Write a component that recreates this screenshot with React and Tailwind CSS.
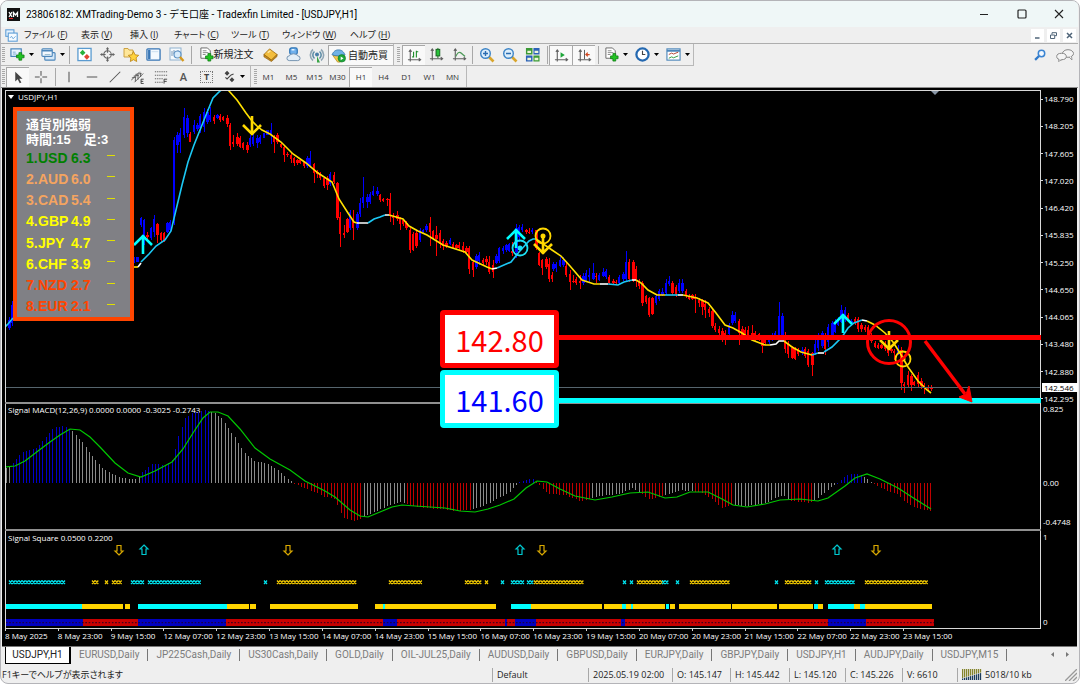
import React from 'react';

const STEP = 3.3125;

// Candles, in thirds of a pixel from the run's origin: colour + body, or colour + high, body, low
const candleRuns = [
  { x: 9, top: 85, bars: 'b695,705,728,735 b647,660,715,722' },
  {
    x: 134,
    top: 85,
    bars: `b517,535 b515,530 b396,400,420,425 b403,405,450,480 r440,450,455,462 b425,428,460,465 b390,402,440,455 r415,418,450,475
      r440,443,465,470 r440,445,468,472 b410,415,440,445 b405,410,435,440 b155,165,415,420 b140,150,180,203 b130,145,170,205 b70,95,150,160
      b90,98,145,155 r140,146,170,172 b105,120,142,148 b115,120,133,138 b88,92,130,145 b70,80,125,140 b72,80,112,118 b65,90,105,112
      r90,97,108,118 b86,90,100,103 r88,92,105,112 r93,97,105,108 r90,100,118,125 r115,120,182,195 r150,172,178,185 r145,155,178,182
      r152,160,185,190 r170,175,190,195 r170,180,195,205 b150,160,180,185 b145,155,178,182 b150,160,175,190 b150,155,170,178`,
  },
  {
    x: 264,
    top: 85,
    bars: `b143,160 b135,150 b115,135,150,178 r150,155,172,203 r145,150,172,178 r172,178,186,190 r180,186,210,230 r200,206,210,216
      r205,210,222,235 r215,220,235,242 r222,226,234,240 r225,226,233,238 r228,230,243,250 b212,218,243,248 b198,220,240,250 r235,238,265,294
      r255,262,267,278 r262,266,280,286 r275,280,303,308 r272,280,300,314 b260,268,298,302 r262,270,290,298 r290,293,398,404 r380,395,447,487
      r420,445,450,458 r400,403,440,445 b375,382,428,434 r375,405,430,465 b382,388,430,434 b340,353,388,395 b275,335,355,370 b328,335,350,368
      b320,328,352,356 b303,318,330,334 b306,318,328,332 r326,330,346,350 r338,342,347,352 r338,341,345,362 r323,343,393,412 r384,395,400,420
      r378,390,402,408 r395,400,418,435 r402,406,418,424 r408,414,430,436 r430,435,494,504 r440,446,494,498 r436,444,482,488 b430,436,466,470
      b432,435,441,444 b416,422,436,440 r397,415,440,483 r434,438,460,465 r423,450,462,512 r436,444,476,490 r462,468,484,496 r468,474,482,488
      b460,464,476,480 r470,476,488,492 r476,480,490,494 r472,480,490,498 r472,482,496,503 r484,490,502,508 r484,490,553,568 r528,532,556,575
      b508,514,545,552 b502,510,528,540 r518,524,534,542 r514,522,532,540 r514,530,560,566 r526,540,562,580 b508,514,534,538 b486,490,528,534
      b484,490,498,506 b476,480,494,500 b474,478,498,502 r472,498,504,512 b418,430,500,520 b420,425,455,470 b417,425,436,442 r432,436,442,446
      r428,440,443,447 b430,434,442,446 r434,436,488,494 r500,505,540,543 r522,526,548,570 r515,522,546,552 r518,536,583,590 r560,570,582,592`,
  },
  {
    x: 553,
    top: 220,
    bars: `b125,132,148,152 b125,132,145,155 b110,120,138,142 b112,120,134,140 r130,138,164,170 r150,162,185,210 r165,182,186,190 r172,176,190,196
      r165,182,190,207 b158,168,190,194 b150,160,182,186 b145,165,170,188 b130,160,176,180 r160,168,172,190 b160,165,180,184 b145,155,168,172
      b148,154,170,176 r165,172,190,196 r178,184,190,194 r180,186,190,196 b165,170,188,192 b155,162,178,184 b93,125,176,182 r118,125,178,186
      r120,125,180,186 r138,146,180,200 r178,184,198,206 r184,190,248,258 r224,228,246,252 r230,234,284,290 r230,234,283,286 b224,228,248,254
      b208,214,238,242 b205,216,224,228 b178,188,220,226 b167,182,192,198 r182,188,220,226 r194,200,222,230 b178,190,212,218 b178,188,212,218
      r206,214,226,234 r222,228,236,240 r222,226,236,240 r222,230,238,280 r234,240,250,262 r236,242,262,285 r240,252,270,295 r262,266,278,292
      r268,272,318,324 r308,318,330,336 r318,328,340,346 r325,332,352,365 r330,340,350,375 b308,314,342,348 b273,285,308,314 b276,285,302,308
      r298,302,340,375 r318,326,345,352 r322,330,350,360 r318,330,345,350`,
  },
  {
    x: 752,
    top: 270,
    bars: `r165,190,205,210 r182,188,205,212 r188,192,208,214 r200,206,228,250 r198,204,220,226 b194,200,215,222 b190,198,208,212 b182,188,195,200
      b97,138,195,200 b128,138,195,200 r185,195,238,250 r212,220,252,265 r228,235,264,268 r232,238,266,270 r234,238,252,258 b230,240,246,254
      r232,238,258,264 r238,244,284,292 r246,250,284,318 b208,222,250,255 b188,205,235,242 b182,190,228,234 r190,200,238,255 b162,170,215,230
      b152,160,200,206 b148,160,186,190 b142,148,164,168 b105,120,155,160 b110,120,150,156 r128,134,152,156 b148,152,158,162 r142,148,160,166
      r140,146,176,185 r158,164,178,186 r164,170,180,186 r164,172,198,204 r190,196,212,218 r212,218,230,235 r220,226,234,238 r222,226,234,238
      r212,218,236,242 r228,234,248,258 r234,238,244,250 r238,242,248,270 b226,234,248,256 r232,240,340,360 r336,342,348,368 r302,316,344,350
      r312,318,346,362 r332,336,344,348 r306,316,342,350 r324,332,348,356 r338,346,354,372 r344,350,358,362 r346,350,358,364`,
  },
];

const candles = candleRuns.flatMap(({ x, top, bars }) =>
  bars.trim().split(/\s+/).map((bar, i) => {
    const n = bar.slice(1).split(',').map(Number);
    const [hi, a, b, lo] = n.length === 2 ? [n[0], n[0], n[1], n[1]] : n;
    return {
      up: bar[0] === 'b',
      x: x + i * STEP,
      hi: top + hi / 3,
      a: top + a / 3,
      b: top + b / 3,
      lo: top + lo / 3,
    };
  })
);

const CYAN = '#1cc8f4';
const YELLOW = '#ffe000';

const average = [
  [CYAN, '5,327 8,324 13,318'],
  [YELLOW, '133,267 138,267'],
  ['#fff', '138,267 141,263'],
  [CYAN, '141,262 149,254 156,246 165,240 171,231 176,210 182,185 188,162 194,145 200,130 206,115 213,98 220,91 223,89'],
  [YELLOW, '227,89 229,91 237,100 246,113 252,121 257,126 262,130 270,134 281,142 293,154 306,163 318,173 332,182 339,199 348,213 354,222 357,223'],
  ['#fff', '357,223 368,223'],
  [CYAN, '368,223 374,219 380,217 385,215'],
  ['#fff', '385,215 389,215'],
  [YELLOW, '389,215 403,219 409,226 418,231 427,235 443,245 465,252 472,260 487,267 492,269'],
  ['#fff', '492,269 497,268'],
  [CYAN, '497,268 511,262 519,252 529,241 533,239 536,239'],
  [YELLOW, '536,239 552,250 561,256 570,266 582,280 594,284 600,284'],
  ['#fff', '600,284 608,284'],
  [CYAN, '608,284 618,285 624,282 632,280'],
  ['#fff', '632,280 636,280'],
  [YELLOW, '636,280 641,283 648,290 657,295 665,295'],
  [CYAN, '665,295 678,295'],
  ['#fff', '678,295 683,295'],
  [YELLOW, '683,295 697,298 708,303 716,313 725,325 733,328 742,333 752,340 765,345 770,345'],
  ['#fff', '770,345 776,344 779,341 784,341'],
  [YELLOW, '784,341 792,347 801,352 812,355'],
  [CYAN, '812,355 818,353'],
  ['#fff', '818,353 824,353'],
  [CYAN, '824,352 832,347 842,337 848,328 854,323 862,320'],
  ['#fff', '862,320 867,321'],
  [YELLOW, '867,321 875,325 885,333 893,342 900,353 908,367 918,381 927,390 931,393'],
];

const macdShape = [
  [5, 469], [12, 464], [22, 452], [37, 448], [45, 438], [53, 428], [62, 426], [70, 429], [82, 442], [92, 456], [102, 468],
  [112, 474], [122, 478], [135, 479], [142, 472], [152, 464], [165, 465], [172, 460], [178, 437], [185, 418], [192, 413],
  [205, 410], [215, 413], [222, 419], [235, 438], [245, 454], [255, 461], [268, 464], [280, 472], [290, 481], [295, 483],
  [303, 488], [315, 492], [325, 497], [335, 499], [342, 517], [352, 521], [360, 519], [372, 513], [385, 507], [400, 502],
  [412, 506], [425, 508], [440, 509], [455, 511], [470, 510], [485, 505], [500, 497], [508, 493], [518, 483], [525, 480],
  [531, 478], [537, 483], [548, 494], [565, 495], [580, 501], [590, 499], [600, 496], [620, 494], [633, 488], [640, 493],
  [650, 500], [660, 497], [672, 493], [680, 490], [690, 491], [700, 492], [712, 499], [722, 508], [732, 505], [745, 506],
  [765, 503], [775, 498], [783, 495], [790, 501], [810, 503], [820, 496], [830, 488], [838, 483], [845, 476], [852, 473],
  [860, 475], [868, 479], [872, 483], [885, 490], [898, 494], [905, 502], [915, 508], [932, 511],
];

// each entry: bars left of this x get the colour
const macdColors = [
  [10, '#8a8a8a'], [69, '#0000c8'], [139, '#8a8a8a'], [211, '#0000c8'], [293, '#8a8a8a'], [361, '#c00000'], [405, '#8a8a8a'],
  [470, '#c00000'], [518, '#8a8a8a'], [536, '#0000c8'], [592, '#c00000'], [640, '#8a8a8a'], [664, '#c00000'], [694, '#8a8a8a'],
  [733, '#c00000'], [790, '#8a8a8a'], [814, '#c00000'], [837, '#8a8a8a'], [863, '#0000c8'], [871, '#8a8a8a'], [940, '#c00000'],
];

const macdSignal =
  '5,467 15,466 25,461 38,451 50,442 60,435 70,429 80,430 90,437 100,447 115,463 128,473 141,477 155,471 172,462 183,449 193,433 203,418 210,412 218,412 228,416 240,429 255,448 270,459 290,470 305,481 325,491 335,497 350,510 360,516 368,517 380,512 392,507 402,505 415,506 430,507 445,508 460,511 475,512 488,509 500,505 514,499 526,488 537,481 547,482 560,489 575,496 595,500 612,497 630,493 648,492 665,498 677,497 690,492 708,492 722,499 733,505 747,507 765,504 780,500 800,499 818,501 828,498 845,486 855,478 867,474 880,479 898,488 915,499 931,509';

const macdY = (x) => {
  const i = macdShape.findIndex(([px]) => px >= x);
  if (i <= 0) return macdShape[0][1];
  const [x0, y0] = macdShape[i - 1];
  const [x1, y1] = macdShape[i];
  return y0 + ((y1 - y0) * (x - x0)) / (x1 - x0);
};

const macdBars = Array.from({ length: 280 }, (_, i) => {
  const x = 6 + i * STEP;
  return { x, y: macdY(x), color: macdColors.find(([end]) => x < end)[1] };
});

const crossRuns = [
  ['c', 9, 66], ['y', 92, 99], ['y', 105, 109], ['y', 112, 122], ['c', 131, 145], ['c', 148, 201], ['c', 264, 267], ['y', 277, 357],
  ['y', 389, 423], ['y', 465, 482], ['y', 485, 489], ['c', 501, 505], ['c', 511, 525], ['c', 527, 532], ['y', 534, 585],
  ['c', 623, 627], ['c', 630, 634], ['y', 637, 662], ['c', 662, 670], ['c', 676, 680], ['y', 690, 730], ['c', 775, 779],
  ['y', 785, 812], ['c', 815, 819], ['c', 825, 855], ['y', 865, 928],
];

const crossPath = (a, b) =>
  Array.from({ length: Math.round((b - a) / STEP) }, (_, k) => {
    const x = a + k * STEP;
    return `M${x} 580.5l3 3.500M${x + 3} 580.5l-3 3.500`;
  }).join('');

const squareRuns = [
  ['c', 5, 82], ['y', 82, 123], ['y', 125, 130], ['c', 138, 227], ['y', 227, 249], ['y', 250, 256], ['y', 270, 358], ['y', 375, 496],
  ['c', 383, 385], ['c', 511, 531], ['y', 531, 602], ['y', 604, 665], ['c', 622, 626], ['c', 631, 633], ['c', 666, 669],
  ['y', 670, 675], ['y', 679, 731], ['y', 732, 777], ['y', 779, 813], ['c', 814, 818], ['y', 818, 823], ['c', 828, 854],
  ['y', 854, 860], ['c', 860, 865], ['y', 865, 932],
];

const trendRuns = [
  ['b', 5, 83], ['r', 83, 138], ['b', 138, 226], ['r', 226, 383], ['b', 383, 397], ['r', 397, 505], ['b', 505, 507], ['r', 507, 515],
  ['b', 515, 536], ['r', 536, 621], ['b', 621, 625], ['r', 625, 828], ['b', 828, 866], ['r', 866, 934],
];

const prices = [
  '148.790', '148.205', '147.605', '147.020', '146.420', '145.835', '145.250', '144.650', '144.065', '143.480', '142.880', '142.295',
];

const times = [
  '8 May 2025', '8 May 23:00', '9 May 15:00', '12 May 07:00', '12 May 23:00', '13 May 15:00', '14 May 07:00', '14 May 23:00',
  '15 May 15:00', '16 May 07:00', '16 May 23:00', '19 May 15:00', '20 May 07:00', '20 May 23:00', '21 May 15:00', '22 May 07:00',
  '22 May 23:00', '23 May 15:00',
];

const strengths = [
  ['USD', '6.3', 'text-[#008000]'],
  ['AUD', '6.0', 'text-[#f4a460]'],
  ['CAD', '5.4', 'text-[#f4a460]'],
  ['GBP', '4.9', 'text-[#ffff00]'],
  ['JPY', '4.7', 'text-[#ffff00]'],
  ['CHF', '3.9', 'text-[#ffff00]'],
  ['NZD', '2.7', 'text-[#ff4500]'],
  ['EUR', '2.1', 'text-[#ff4500]'],
];

const menus = [
  ['ファイル', 'F', 'w-[57px]'],
  ['表示', 'V', 'w-[49px]'],
  ['挿入', 'I', 'w-[44px]'],
  ['チャート', 'C', 'w-[57px]'],
  ['ツール', 'T', 'w-[51px]'],
  ['ウィンドウ', 'W', 'w-[68px]'],
  ['ヘルプ', 'H', 'w-[50px]'],
];

const tabs = [
  'EURUSD,Daily', 'JP225Cash,Daily', 'US30Cash,Daily', 'GOLD,Daily', 'OIL-JUL25,Daily', 'AUDUSD,Daily', 'GBPUSD,Daily',
  'EURJPY,Daily', 'GBPJPY,Daily', 'USDJPY,H1', 'AUDJPY,Daily', 'USDJPY,M15',
];

const Icon = ({ children, size = 15 }) => (
  <svg width={size} height={size} viewBox="0 0 16 16" fill="none" className="shrink-0" aria-hidden="true">
    {children}
  </svg>
);

const Plus = ({ x = 8, y = 8 }) => (
  <path
    d={`M${x + 2.5} ${y}h3v2.5h2.5v3h-2.5v2.5h-3v-2.5h-2.5v-3h2.5z`}
    fill="#22c322"
    stroke="#0b7a12"
    strokeWidth="0.8"
  />
);

const Caret = () => (
  <svg width="5" height="3" viewBox="0 0 5 3" aria-hidden="true">
    <path d="M0 0h5L2.5 3z" fill="#000" />
  </svg>
);

const Axes = ({ children }) => (
  <Icon>
    <path d="M3.500 2.500v12M1 12.500h13M2 4l1.500-2L5 4M12.500 11l2 1.500-2 1.500" stroke="#606060" strokeWidth="1.200" />
    {children}
  </Icon>
);

const NewChartIcon = () => (
  <Icon>
    <rect x="1" y="2" width="11" height="8" fill="#eaf4ff" stroke="#3f7fb8" strokeWidth="1.2" />
    <path d="M3 5.500h3M3 7.500h4" stroke="#7aa9d0" />
    <Plus x={7} y={6} />
  </Icon>
);

const ProfilesIcon = () => (
  <Icon>
    <rect x="4" y="6" width="11" height="8" rx="1" fill="#d6e8f8" stroke="#4c86ba" strokeWidth="1.2" />
    <rect x="1" y="2" width="11" height="8" rx="1" fill="#f2f8fe" stroke="#4c86ba" strokeWidth="1.2" />
    <path d="M1 4h11" stroke="#4c86ba" strokeWidth="1.4" />
    <path d="M4 8h6" stroke="#9bc" />
  </Icon>
);

const MarketIcon = () => (
  <Icon>
    <rect x="1" y="1.500" width="14" height="13" fill="#fff" stroke="#5b9bd0" strokeWidth="1.4" />
    <path d="M6 3l3 3-3 3-3-3z" fill="#27b13c" />
    <path d="M10.500 7.500l3 3-3 3-3-3z" fill="#e04632" />
  </Icon>
);

const DataWindowIcon = () => (
  <Icon>
    <circle cx="8" cy="8" r="4" stroke="#666" strokeWidth="1.200" />
    <path d="M8 1v5M8 10v5M1 8h5M10 8h5" stroke="#666" strokeWidth="1.200" />
    <path d="M8 0l1.800 2.500H6.200zM8 16l1.800-2.500H6.200zM0 8l2.500-1.800v3.600zM16 8l-2.500-1.800v3.600z" fill="#666" />
  </Icon>
);

const Star = () => (
  <path d="M10.500 4.500l1.600 3.300 3.600.5-2.600 2.500.6 3.700-3.200-1.800-3.200 1.800.6-3.700-2.600-2.500 3.600-.5z" fill="#ffd23c" stroke="#b98210" strokeWidth="0.8" />
);

const NavigatorIcon = () => (
  <Icon size={16}>
    <path d="M1 1.500h4l1 1.500h4v7H1z" fill="#ffe79a" stroke="#c79a35" strokeWidth="0.900" />
    <Star />
  </Icon>
);

const TerminalIcon = () => (
  <Icon>
    <rect x="1" y="2" width="14" height="12" rx="1" fill="#f4f9ff" stroke="#3775b5" strokeWidth="1.400" />
    <path d="M3.500 3v10" stroke="#3775b5" strokeWidth="2.600" />
    <path d="M6 5h7" stroke="#c7dcef" />
  </Icon>
);

const TesterIcon = () => (
  <Icon size={16}>
    <rect x="1" y="1" width="11" height="12" fill="#f6fafd" stroke="#8fb2d0" />
    <path d="M3 4v5M5 3v4M9 3v3" stroke="#7898b8" />
    <circle cx="8.500" cy="7.500" r="3.500" fill="#d7ebfb" stroke="#5f93c4" strokeWidth="1.200" />
    <path d="M11 10l3.500 4" stroke="#d79a1e" strokeWidth="2.400" />
  </Icon>
);

const OrderIcon = () => (
  <Icon>
    <path d="M2 1h7l3 3v8H2z" fill="#fff" stroke="#666" />
    <path d="M4 4h4M4 6h6M4 8h3" stroke="#888" />
    <Plus x={7} y={7} />
  </Icon>
);

const BookIcon = () => (
  <Icon>
    <path d="M1 8l6-6 8 6-6 6z" fill="#f3bd3d" stroke="#a26e10" strokeWidth="0.900" />
    <path d="M1 8v2.500l8 5 6-5.500V8l-6 6z" fill="#c98b1a" stroke="#8d5f0d" strokeWidth="0.700" />
    <path d="M5 6l3-2" stroke="#ffe9a5" strokeWidth="1.500" />
  </Icon>
);

const CommunityIcon = () => (
  <Icon>
    <rect x="4" y="1" width="8" height="7" rx="2" fill="#6fb0ec" stroke="#2d74b5" strokeWidth="1.300" />
    <path d="M3.500 14.500a2.500 2.500 0 010-5 4.800 3.500 0 019 0 2.500 2.500 0 010 5z" fill="#e3eef7" stroke="#6f8fae" />
    <path d="M6 3h3" stroke="#e8f4ff" strokeWidth="1.500" />
  </Icon>
);

const SignalIcon = () => (
  <Icon size={16}>
    <path d="M4 13.500a7 7 0 010-11M12 2.500a7 7 0 010 11" stroke="#90a6b5" strokeWidth="1.600" />
    <path d="M5.500 11.500a4.500 4.500 0 010-7M10.500 4.500a4.500 4.500 0 010 7" stroke="#5f8ea8" strokeWidth="1.600" />
    <circle cx="8" cy="7.500" r="2" fill="#4c7fa8" />
    <path d="M8 9l3 6.500H8z" fill="#3aa546" />
  </Icon>
);

const AutoIcon = () => (
  <Icon>
    <path d="M2 8h12l-4 7H7z" fill="#f3c94a" stroke="#b48922" strokeWidth="0.800" />
    <path d="M1 7c1-1 2-5 7-5s6 4 7 5c-3 2-11 2-14 0z" fill="#6fb2e6" stroke="#2f75ad" strokeWidth="0.900" />
    <circle cx="11.500" cy="11" r="4" fill="#1ea63a" stroke="#0f7422" strokeWidth="0.600" />
    <path d="M10.300 9v4l3-2z" fill="#fff" />
  </Icon>
);

const ZoomIcon = ({ plus }) => (
  <Icon size={16}>
    <path d="M9.500 9.500l5 5" stroke="#d9a52b" strokeWidth="2.600" />
    <circle cx="6.500" cy="6.500" r="4.800" fill="#dceefb" stroke="#3d84c6" strokeWidth="1.400" />
    <path d={plus ? 'M4 6.500h5M6.500 4v5' : 'M4 6.500h5'} stroke="#2b6cb0" strokeWidth="1.400" />
  </Icon>
);

const TileIcon = () => (
  <Icon>
    <path d="M1 1h7v7H1z" fill="#3b9a36" />
    <path d="M9 1h6.500v7H9z" fill="#2b62b8" />
    <path d="M1 9h7v6.500H1z" fill="#2b62b8" />
    <path d="M9 9h6.500v6.500H9z" fill="#3b9a36" />
    <path d="M2.500 4h4v2.500h-4zM10.200 4h4v2.500h-4zM2.500 11.500h4V14h-4zM10.200 11.500h4V14h-4z" fill="#eef6d9" />
  </Icon>
);

const ClockIcon = () => (
  <Icon>
    <circle cx="8" cy="8" r="6.500" fill="#fff" stroke="#2468b0" strokeWidth="2.400" />
    <path d="M8 4v4h3" stroke="#444" strokeWidth="1.200" />
  </Icon>
);

const TemplateIcon = () => (
  <Icon>
    <rect x="1" y="2" width="14" height="12" fill="#fff" stroke="#4c86ba" strokeWidth="1.200" />
    <path d="M1 4h14" stroke="#4c86ba" strokeWidth="2" />
    <path d="M3 8l3-1.500 2 1 5-2" stroke="#b3402f" />
    <path d="M3 12l3-1.500 2 1 5-2" stroke="#2f9a3c" />
  </Icon>
);

const ToolButton = ({ label, on, wide, caret, children }) => (
  <button
    type="button"
    aria-label={label}
    className={`flex h-5 shrink-0 items-center justify-center gap-1 ${wide ? 'w-[31px]' : 'w-[23px]'} ${
      on ? 'border-t border-l border-[#a8a8a8] bg-[#f9f9f9]' : ''
    }`}
  >
    {children}
    {caret && <Caret />}
  </button>
);

const Divider = () => <span className="mx-px h-[18px] w-px shrink-0 bg-[#a8a8a8]" />;

const Grip = () => <span className="h-4 w-[3px] shrink-0 bg-[repeating-linear-gradient(#a8a8a8_0_1px,#efefef_1px_2px)]" />;

function TitleBar() {
  return (
    <header className="flex h-[26px] items-center bg-[#eff7f7] pl-[6px] text-black">
      <svg width="13" height="13" viewBox="0 0 13 13" aria-hidden="true">
        <rect width="13" height="13" fill="#111" />
        <path d="M2 4l3 5M5 4L2 9" stroke="#fff" strokeWidth="1.300" />
        <path d="M6.500 9V4.500l2 2.500 2-2.500V9" stroke="#fff" strokeWidth="1.300" fill="none" />
        <path d="M2 10.500h4" stroke="#e02020" />
      </svg>
      <h1 className="ml-[6px] flex-1 font-['Roboto','Noto_Sans_CJK_JP',sans-serif] text-[10px] whitespace-nowrap">
        23806182: XMTrading-Demo 3 - デモ口座 - Tradexfin Limited - [USDJPY,H1]
      </h1>
      <div className="flex">
        <button type="button" aria-label="Minimize" className="flex w-[38px] justify-center">
          <svg width="10" height="10" viewBox="0 0 10 10"><path d="M1 5.500h8" stroke="#222" /></svg>
        </button>
        <button type="button" aria-label="Maximize" className="flex w-[37px] justify-center">
          <svg width="10" height="10" viewBox="0 0 10 10"><rect x="1" y="1" width="8" height="8" rx="1" fill="none" stroke="#222" strokeWidth="1.200" /></svg>
        </button>
        <button type="button" aria-label="Close" className="flex w-[38px] justify-center">
          <svg width="10" height="10" viewBox="0 0 10 10"><path d="M1 1l8 8M9 1L1 9" stroke="#222" strokeWidth="1.100" /></svg>
        </button>
      </div>
    </header>
  );
}

function MenuBar() {
  return (
    <nav className="flex h-[17px] items-center border-b border-[#adadad] pl-1">
      <Icon size={13}>
        <rect x="1" y="1" width="10" height="8" fill="#e6f2fd" stroke="#5a9bd5" strokeWidth="1.300" />
        <rect x="4" y="5" width="11" height="10" fill="#f6fbff" stroke="#5a9bd5" strokeWidth="1.300" />
        <path d="M6 11l2-2 2 3 3-3" stroke="#5a9bd5" />
      </Icon>
      <div className="ml-[6px] flex flex-1">
        {menus.map(([name, key, width]) => (
          <button
            key={name}
            type="button"
            className={`text-left text-[9px] leading-4 whitespace-nowrap [font-feature-settings:'palt'] ${width}`}
          >
            {name} (<u>{key}</u>)
          </button>
        ))}
      </div>
      <div className="flex gap-[3px] pr-[2px]">
        <button type="button" aria-label="Minimize chart" className="flex h-[13px] w-[13px] items-center justify-center bg-white">
          <svg width="7" height="7" viewBox="0 0 7 7"><path d="M1 6h4.500" stroke="#4f6478" strokeWidth="1.400" /></svg>
        </button>
        <button type="button" aria-label="Restore chart" className="flex h-[13px] w-[13px] items-center justify-center bg-white">
          <svg width="7" height="7" viewBox="0 0 7 7"><path d="M2 2.500V.7h4.500v3H5M.5 3h4.200v3.500H.5z" stroke="#4f6478" fill="none" /></svg>
        </button>
        <button type="button" aria-label="Close chart" className="flex h-[13px] w-[13px] items-center justify-center bg-white">
          <svg width="7" height="7" viewBox="0 0 7 7"><path d="M1 1l5 5M6 1L1 6" stroke="#4f6478" strokeWidth="1.500" /></svg>
        </button>
      </div>
    </nav>
  );
}

function MainToolbar() {
  return (
    <div className="flex h-[22px] items-center">
      <div className="flex h-full items-center border-r border-b border-[#b8b8b8] pl-[1px]">
        <Grip />
        <span className="w-[1px]" />
        <ToolButton label="New chart" wide caret><NewChartIcon /></ToolButton>
        <ToolButton label="Profiles" wide caret><ProfilesIcon /></ToolButton>
        <Divider />
        <span className="w-[2px]" />
        <ToolButton label="Market watch"><MarketIcon /></ToolButton>
        <ToolButton label="Data window"><DataWindowIcon /></ToolButton>
        <ToolButton label="Navigator"><NavigatorIcon /></ToolButton>
        <ToolButton label="Terminal"><TerminalIcon /></ToolButton>
        <ToolButton label="Strategy tester"><TesterIcon /></ToolButton>
        <span className="w-[2px]" />
        <Divider />
        <button type="button" className="flex h-5 w-[66px] items-center justify-center text-[10px] whitespace-nowrap">
          <OrderIcon />
          新規注文
        </button>
        <ToolButton label="MetaEditor"><BookIcon /></ToolButton>
        <ToolButton label="Community"><CommunityIcon /></ToolButton>
        <ToolButton label="Signals"><SignalIcon /></ToolButton>
        <button
          type="button"
          className="flex h-5 w-[65px] items-center gap-[2px] border-t border-l border-[#a8a8a8] bg-[#f9f9f9] pl-[2px] text-[10px] whitespace-nowrap"
        >
          <AutoIcon />
          自動売買
        </button>
      </div>
      <div className="flex h-full items-center border-r border-b border-[#b8b8b8] pl-[3px]">
        <Grip />
        <span className="w-[2px]" />
        <ToolButton label="Bar chart" on>
          <Axes><path d="M7 4v6M7 9.500H5.500M10 3v7M10 4h2" stroke="#1f8f2c" strokeWidth="1.200" /></Axes>
        </ToolButton>
        <ToolButton label="Candlesticks">
          <Axes><path d="M9.500 1v11" stroke="#15621d" /><rect x="7.500" y="2.500" width="4" height="7" fill="#28c23a" stroke="#15621d" /></Axes>
        </ToolButton>
        <ToolButton label="Line chart">
          <Axes><path d="M4 10c2-4 3-5 5-4s3 3 5 4" stroke="#4f9a5a" strokeWidth="1.200" /></Axes>
        </ToolButton>
        <Divider />
        <span className="w-[1px]" />
        <ToolButton label="Zoom in"><ZoomIcon plus /></ToolButton>
        <ToolButton label="Zoom out"><ZoomIcon /></ToolButton>
        <ToolButton label="Tile windows"><TileIcon /></ToolButton>
        <span className="w-[2px]" />
        <Divider />
        <ToolButton label="Auto scroll" on>
          <Axes><path d="M7 4.500v6L11.500 7.500z" fill="#1ea63a" /></Axes>
        </ToolButton>
        <ToolButton label="Chart shift" on>
          <Axes><path d="M8 2v10" stroke="#555" /><path d="M13.500 7H10M11.500 5L9.500 7l2 2" stroke="#d2471f" strokeWidth="1.300" /></Axes>
        </ToolButton>
        <span className="w-[2px]" />
        <Divider />
        <ToolButton label="Indicators" wide caret><OrderIcon /></ToolButton>
        <ToolButton label="Periods" wide caret><ClockIcon /></ToolButton>
        <ToolButton label="Templates" wide caret><TemplateIcon /></ToolButton>
      </div>
      <div className="flex flex-1 items-center justify-end gap-[10px] pr-1">
        <button type="button" aria-label="Search">
          <Icon size={12}>
            <path d="M1.500 14.500L7 9" stroke="#2f78c8" strokeWidth="3" />
            <circle cx="10" cy="6" r="4.300" fill="#f2f8ff" stroke="#3a84d2" strokeWidth="2" />
          </Icon>
        </button>
        <button type="button" aria-label="Chat">
          <svg width="18" height="13" viewBox="0 0 18 13" aria-hidden="true">
            <ellipse cx="12" cy="4.500" rx="5.500" ry="3.800" fill="#f4f4f4" stroke="#888" />
            <path d="M13 8l3 3-.5-4" fill="#f4f4f4" stroke="#888" strokeWidth="0.800" />
            <ellipse cx="5.500" cy="7.500" rx="4.800" ry="3.200" fill="#f4f4f4" stroke="#888" />
            <path d="M3 10l-.5 2.500L6 10.600" fill="#f4f4f4" stroke="#888" strokeWidth="0.800" />
          </svg>
        </button>
      </div>
    </div>
  );
}

function DrawToolbar() {
  return (
    <div className="flex h-[22px] items-center border-b border-[#8c8c8c]">
      <div className="flex h-full items-center border-r border-[#b8b8b8] pl-[1px]">
        <Grip />
        <span className="w-[1px]" />
        <ToolButton label="Cursor" on>
          <Icon size={13}><path d="M4 1v12l3-3 2.500 5 2-1L9 9.500h4z" fill="#444" /></Icon>
        </ToolButton>
        <ToolButton label="Crosshair">
          <Icon size={14}><path d="M8 1v5.500M8 9.500V15M1 8h5.500M9.500 8H15" stroke="#555" strokeWidth="1.200" /></Icon>
        </ToolButton>
        <span className="w-[2px]" />
        <Divider />
        <ToolButton label="Vertical line"><Icon size={14}><path d="M8 2v12" stroke="#555" strokeWidth="1.200" /></Icon></ToolButton>
        <ToolButton label="Horizontal line"><Icon size={14}><path d="M2 8h12" stroke="#555" strokeWidth="1.200" /></Icon></ToolButton>
        <ToolButton label="Trend line"><Icon size={14}><path d="M2 14L14 2" stroke="#555" strokeWidth="1.200" /></Icon></ToolButton>
        <ToolButton label="Channel">
          <Icon size={14}>
            <path d="M0 12L10 2M4 14L14 4M1 9l5-1M3 7l6-1M5 5l7-1M5 13V8M8 11V6M11 8V3" stroke="#555" />
            <path d="M14.500 10.500H11.500v5h3M11.500 13h2.500" stroke="#333" />
          </Icon>
        </ToolButton>
        <ToolButton label="Fibonacci">
          <Icon size={14}>
            <path d="M1 2h14M1 6h14M1 10h9M1 14h9" stroke="#555" strokeDasharray="1.5 1" />
            <path d="M11.500 15.500v-5h3.500M11.500 13h3" stroke="#333" />
          </Icon>
        </ToolButton>
        <ToolButton label="Text"><span className="text-[11px] leading-4 font-semibold text-[#555]">A</span></ToolButton>
        <ToolButton label="Label">
          <span className="border border-dotted border-[#777] px-[3px] text-[9px] leading-[10px] font-bold text-[#444]">T</span>
        </ToolButton>
        <ToolButton label="Arrows" wide caret>
          <Icon size={13}>
            <path d="M5 1l3 3-3 3-3-3zM11 9l3 3-3 3-3-3z" fill="#444" />
            <path d="M3 9l2 2 5-5 3-1" stroke="#444" strokeWidth="1.300" />
          </Icon>
        </ToolButton>
        <span className="w-[1px]" />
      </div>
      <div className="flex h-full items-center border-r border-[#b8b8b8] pr-[2px] pl-[3px] text-[8px] text-[#333]">
        <Grip />
        {['M1', 'M5', 'M15', 'M30', 'H1', 'H4', 'D1', 'W1', 'MN'].map((p) => (
          <ToolButton key={p} label={p} on={p === 'H1'}>{p}</ToolButton>
        ))}
      </div>
    </div>
  );
}

// Big entry arrow; (x, y) is its tip
const TradeArrow = ({ x, y, up, color }) => {
  const s = up ? 1 : -1;
  return (
    <path d={`M${x} ${y}v${19 * s}M${x - 9} ${y + 10 * s}L${x} ${y + s}L${x + 9} ${y + 10 * s}`} stroke={color} strokeWidth="2.6" fill="none" />
  );
};

const Ring = ({ x, y, color }) => (
  <g>
    <circle cx={x} cy={y} r="7.500" fill="none" stroke={color} strokeWidth="1.800" />
    <circle cx={x} cy={y} r="2.500" fill={color} />
  </g>
);

function PricePane() {
  return (
    <section className="flex h-[312px]">
      <div className="relative flex-1 overflow-hidden border-t border-l border-[#d8d8d8]">
        <svg className="absolute inset-0 h-full w-full" shapeRendering="crispEdges" aria-hidden="true">
          <g transform="translate(-6 -91)">
            {candles.map((c, i) => (
              <g key={i} fill={c.up ? '#0000ff' : '#ff0000'}>
                <rect x={Math.round(c.x)} y={c.hi} width="1" height={c.lo - c.hi} />
                <rect x={Math.round(c.x) - 1} y={c.a} width={i % 3 ? 2 : 3} height={Math.max(1, c.b - c.a)} />
              </g>
            ))}
            <g shapeRendering="auto">
              {average.map(([color, points]) => (
                <polyline key={points} points={points} fill="none" stroke={color} strokeWidth="1.600" />
              ))}
              <TradeArrow x={143} y={235} up color="#00ffff" />
              <TradeArrow x={252} y={135} color="#ffd800" />
              <TradeArrow x={516} y={229} up color="#00ffff" />
              <Ring x={520} y={248} color="#1ce0f4" />
              <Ring x={543} y={236} color="#ffd800" />
              <TradeArrow x={543} y={254} color="#ffd800" />
              <TradeArrow x={843} y={314} up color="#00ffff" />
              <TradeArrow x={889} y={350} color="#ffd800" />
              <Ring x={903} y={359} color="#ffd800" />
              <path d="M931 91h8l-4 4z" fill="#8895a5" />
            </g>
            <path d="M0 387.500h3000" stroke="#56656e" />
          </g>
        </svg>
        <p className="flex items-center gap-1 pl-[2px] text-[8px] leading-3 text-white">
          <svg width="6" height="4" viewBox="0 0 6 4" aria-hidden="true"><path d="M0 0h6L3 4z" fill="#fff" /></svg>
          USDJPY,H1
        </p>
      </div>
      <div className="relative -mb-[3px] flex w-[37px] flex-col justify-between border-l border-[#d8d8d8] pt-[3px] text-[8px] leading-3 text-white">
        {prices.map((p) => (
          <span key={p} className="flex items-center gap-px">
            <i className="h-px w-[2px] bg-[#d8d8d8]" />
            {p}
          </span>
        ))}
        <span className="absolute bottom-[13px] left-px bg-white pr-1 pl-[2px] leading-[9px] text-black">142.546</span>
      </div>
    </section>
  );
}

function MacdPane() {
  return (
    <section className="flex h-[125px]">
      <div className="relative flex-1 overflow-hidden border-l border-[#d8d8d8]">
        <svg className="absolute inset-0 h-full w-full" aria-hidden="true">
          <g transform="translate(-6 -404)">
            {macdBars.map((b) => (
              <rect
                key={b.x}
                x={Math.round(b.x)}
                y={Math.min(b.y, 483)}
                width="1"
                height={Math.max(1, Math.abs(b.y - 483))}
                fill={b.color}
                shapeRendering="crispEdges"
              />
            ))}
            <polyline points={macdSignal} fill="none" stroke="#00c800" strokeWidth="1.200" />
          </g>
        </svg>
        <p className="pl-[2px] text-[8px] leading-[12px] text-white">Signal MACD(12,26,9) 0.0000 0.0000 -0.3025 -0.2743</p>
      </div>
      <div className="flex w-[37px] flex-col border-l border-[#d8d8d8] pb-[2px] pl-[2px] text-[8px] leading-[10px] text-white">
        <span>0.825</span>
        <span className="mt-[64px]">0.00</span>
        <span className="mt-auto">-0.4748</span>
      </div>
    </section>
  );
}

const fills = { c: '#00ffff', y: '#ffd400', b: '#0000c0', r: '#c80000' };

function SquarePane() {
  const arrow = 'M0 -5L4 -1H2V4.5H-2V-1H-4z';
  return (
    <section className="flex h-[98px]">
      <div className="relative flex-1 overflow-hidden border-b border-l border-[#d8d8d8]">
        <svg className="absolute inset-0 h-full w-full" aria-hidden="true">
          <defs>
            <pattern id="dots" width={STEP} height="7" patternUnits="userSpaceOnUse" patternTransform="translate(5 619)">
              <path d="M1 3h1.300v1.300H1z" fill="#200020" />
            </pattern>
          </defs>
          <g transform="translate(-6 -531)">
            {[[119, 0], [144, 1], [288, 0], [520, 1], [542, 0], [837, 1], [876, 0]].map(([x, up]) => (
              <path
                key={x}
                d={arrow}
                transform={`translate(${x} 550)${up ? '' : ' scale(1 -1)'}`}
                fill="none"
                stroke={up ? '#00c8d0' : '#d8a800'}
                strokeWidth="1.200"
              />
            ))}
            {crossRuns.map(([c, a, b]) => (
              <path key={a} d={crossPath(a, b)} stroke={c === 'c' ? '#00e5f0' : '#f0c800'} strokeWidth="1.200" />
            ))}
            {squareRuns.map(([c, a, b]) => (
              <rect key={`${c}${a}`} x={a} y="604" width={b - a} height="5" fill={fills[c]} />
            ))}
            {trendRuns.map(([c, a, b]) => (
              <rect key={a} x={a} y="619" width={b - a} height="7" fill={fills[c]} />
            ))}
            <rect x="5" y="619" width="929" height="7" fill="url(#dots)" />
          </g>
        </svg>
        <p className="pl-[2px] text-[8px] leading-[13px] text-white">Signal Square 0.0500 0.2200</p>
      </div>
      <div className="flex w-[37px] flex-col justify-between border-l border-[#d8d8d8] pb-[2px] pl-[2px] text-[8px] leading-[11px] text-white">
        <span>1</span>
        <span>0</span>
      </div>
    </section>
  );
}

function StrengthPanel() {
  return (
    <aside className="absolute top-[19px] left-[11px] flex h-[214px] w-[121px] flex-col border-4 border-[#ff4500] bg-[#808085] pt-[6px] pl-[9px] font-['Liberation_Sans','Noto_Sans_CJK_JP',sans-serif] text-[14px] font-bold">
      <h2 className="text-[13px] leading-4 text-white">通貨別強弱</h2>
      <p className="text-[13px] leading-[14px] whitespace-pre text-white">時間:15　足:3</p>
      <ol className="flex flex-1 flex-col">
        {strengths.map(([name, value, color], i) => (
          <li key={name} className={`flex flex-1 items-center leading-4 ${color}`}>
            <span className="w-[12px]">{i + 1}.</span>
            <span className="w-[33px]">{name}</span>
            <span className="w-[36px]">{value}</span>
            <i className="mb-1 h-px w-2 bg-[#e0e000]" />
          </li>
        ))}
      </ol>
    </aside>
  );
}

function Annotations() {
  return (
    <>
      <div className="absolute top-[247px] right-[36px] left-[550px] h-[5px] bg-[#ff0000]" />
      <div className="absolute top-[310px] right-[36px] left-[550px] h-[5px] bg-[#00ffff]" />
      <svg className="absolute top-[220px] left-[851px]" width="140" height="100" viewBox="0 0 140 100" fill="none" stroke="#f00" aria-hidden="true">
        <circle cx="36" cy="34" r="21.500" strokeWidth="3" />
        <path d="M72 33l40 53" strokeWidth="3.500" />
        <path d="M119 94l-13-5 7-3 3-8z" fill="#f00" strokeWidth="1" />
      </svg>
      <div className="absolute top-[222px] left-[438px] flex flex-col gap-[2px] font-['Noto_Sans_CJK_JP',sans-serif] text-[29px] leading-[48px]">
        <span className="flex w-[119px] justify-center rounded-sm border-5 border-[#ff0000] bg-white text-[#ff0000]">142.80</span>
        <span className="flex w-[119px] justify-center rounded-sm border-5 border-[#00ffff] bg-white text-[#0000ff]">141.60</span>
      </div>
    </>
  );
}

function Chart() {
  return (
    <main className="relative bg-black pt-[2px] pl-[3px] font-['Open_Sans',sans-serif]">
      <PricePane />
      <div className="mr-[36px] h-[2px] bg-[#909090]" />
      <MacdPane />
      <div className="mr-[36px] h-[2px] bg-[#909090]" />
      <SquarePane />
      <div className="w-full overflow-hidden">
        <div className="flex w-[951px] pb-1 text-[8px] leading-[13px] text-white">
          {times.map((t) => (
            <span
              key={t}
              className="flex-1 basis-0 whitespace-nowrap bg-[linear-gradient(#d8d8d8,#d8d8d8)] bg-[length:1px_2px] bg-no-repeat"
            >
              {t}
            </span>
          ))}
        </div>
      </div>
      <StrengthPanel />
      <Annotations />
    </main>
  );
}

function ChartTabs() {
  return (
    <nav className="flex h-[20px] items-start border-t border-[#777] bg-[#efefef] pl-[3px] font-['Roboto',sans-serif] text-[10px] leading-4 whitespace-nowrap text-[#7c7c7c]">
      <button type="button" className="h-[17px] w-[66px] border-r-2 border-b border-l border-black bg-white text-[#222]">
        USDJPY,H1
      </button>
      {tabs.map((t) => (
        <button key={t} type="button" className="mt-[2px] h-3 border-r border-[#777] px-2 leading-3">
          {t}
        </button>
      ))}
      <span className="ml-auto flex gap-3 pt-[5px] pr-2">
        <svg width="3" height="5" viewBox="0 0 3 5"><path d="M3 0v5L0 2.500z" fill="#777" /></svg>
        <svg width="3" height="5" viewBox="0 0 3 5"><path d="M0 0v5l3-2.500z" fill="#777" /></svg>
      </span>
    </nav>
  );
}

function StatusBar() {
  const cells = [
    ['Default', 'w-[96px]'],
    ['2025.05.19 02:00', 'w-[84px]'],
    ['O: 145.147', 'w-[58px]'],
    ['H: 145.442', 'w-[59px]'],
    ['L: 145.120', 'w-[56px]'],
    ['C: 145.226', 'w-[57px]'],
    ['V: 6610', 'w-[55px]'],
  ];
  return (
    <footer className="flex h-[17px] items-center text-[9px] leading-[14px] whitespace-nowrap text-[#222]">
      <span className="flex-1 [font-feature-settings:'palt']">F1キーでヘルプが表示されます</span>
      {cells.map(([text, width]) => (
        <span key={text} className={`border-l border-[#a8a8a8] pl-1 ${width}`}>{text}</span>
      ))}
      <span className="flex w-[120px] items-center gap-[3px] border-l border-[#a8a8a8] pl-1">
        <svg width="20" height="11" viewBox="0 0 20 11" aria-hidden="true">
          {Array.from({ length: 10 }, (_, i) => (
            <g key={i}>
              <path d={`M${i * 2 + 0.5} 0v${9 - i * 0.6}`} stroke="#84842c" strokeWidth="1.300" />
              <path d={`M${i * 2 + 0.5} ${9.5 - i * 0.6}V11`} stroke="#1b3c5c" strokeWidth="1.300" />
            </g>
          ))}
        </svg>
        <span className="flex-1">5018/10 kb</span>
        <svg width="12" height="12" viewBox="0 0 12 12" aria-hidden="true">
          <path d="M0 12L12 0M4 12l8-8M8 12l4-4" stroke="#999" strokeWidth="1.300" />
        </svg>
      </span>
    </footer>
  );
}

export default function App() {
  return (
    <div className="min-h-screen bg-white font-['Open_Sans','Noto_Sans_CJK_JP',sans-serif] text-[#222]">
      <div className="overflow-hidden rounded-lg border border-[#b4b4b8] bg-[#efefef] pr-px">
        <TitleBar />
        <MenuBar />
        <MainToolbar />
        <DrawToolbar />
        <div className="pr-px pl-px">
          <Chart />
          <ChartTabs />
          <StatusBar />
        </div>
      </div>
    </div>
  );
}
